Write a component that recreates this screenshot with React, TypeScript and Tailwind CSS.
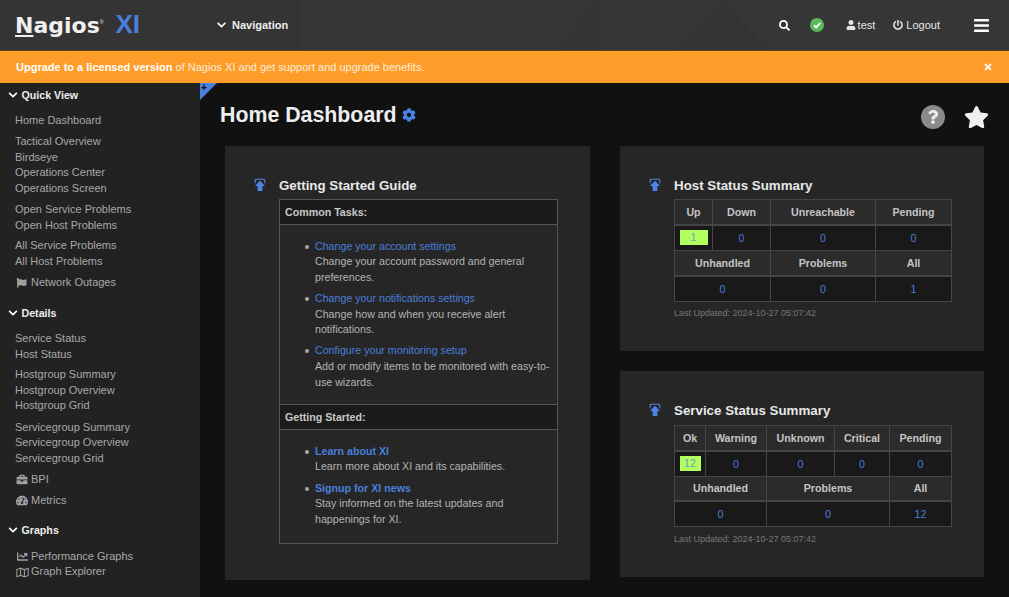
import React from "react";
import { FaChevronDown, FaSearch, FaUser, FaPowerOff, FaBars, FaTimes, FaFlag, FaBriefcase, FaTachometerAlt, FaRegMap, FaCog, FaStar, FaQuestion, FaChartLine } from "react-icons/fa";

const L = ({ children, icon }: { children: React.ReactNode; icon?: React.ReactNode }) => (
  <div className="flex h-[15.7px] items-center leading-[15.7px] text-[#a8a8a8]">
    {icon && <span className="flex w-[16px] shrink-0 justify-start pl-[1px] text-[#a0a0a0]">{icon}</span>}
    <span>{children}</span>
  </div>
);

const SecHead = ({ children }: { children: React.ReactNode }) => (
  <div className="flex h-[16px] items-center pl-[8px] text-[10.67px] font-bold text-[#eeeeee]">
    <FaChevronDown className="mr-[3.5px] h-[10px] w-[10px] text-white" />
    {children}
  </div>
);

const Pin = () => (
  <svg viewBox="0 0 14 14" className="absolute left-[28px] top-[32px] h-[14px] w-[14px]">
    <path d="M2.2 5.2 V2.4 Q2.2 1.2 3.4 1.2 H10.6 Q11.8 1.2 11.8 2.4 V5.2" fill="none" stroke="#4d84e8" strokeWidth="1.1" />
    <path d="M7 2.8 L12 8 H9.4 V13 H4.6 V8 H2 Z" fill="#4d84e8" />
  </svg>
);

const Th = ({ children, colSpan, h = "h-[25px]" }: { children: React.ReactNode; colSpan?: number; h?: string }) => (
  <td colSpan={colSpan} className={`${h} border border-b-2 border-[#454545] bg-[#2b2b2b] p-0 text-center font-bold text-[#c4c4c4]`}>
    {children}
  </td>
);
const Td = ({ children, colSpan, ok }: { children: React.ReactNode; colSpan?: number; ok?: boolean }) => (
  <td colSpan={colSpan} className="h-[26px] border border-[#454545] bg-[#191919] p-0 text-center text-[#4a7fdc]">
    {ok ? <div className="mx-[4.5px] bg-[#b2ff5f] leading-[15px] text-[#6aa5b8]">{children}</div> : children}
  </td>
);

const Card = ({ title, className, children }: { title: string; className: string; children: React.ReactNode }) => (
  <div className={`relative bg-[#262626] pl-[54px] pt-[31px] text-[10.67px] ${className}`}>
    <Pin />
    <h2 className="mb-[5px] h-[17px] text-[13.33px] font-bold leading-[17px] text-[#e8e8e8]">{title}</h2>
    {children}
  </div>
);

const Item = ({ link, bold, children }: { link: string; bold?: boolean; children: React.ReactNode }) => (
  <li className="relative leading-[15.7px] text-[#b4b4b4]">
    <span className="absolute left-[-10px] top-[6px] h-[4px] w-[4px] rounded-full bg-[#aaaaaa]" />
    <div className={`text-[#4a7fdc] ${bold ? "font-bold" : ""}`}>{link}</div>
    {children}
  </li>
);

const Updated = ({ className }: { className: string }) => (
  <p className={`text-[9px] leading-[13px] text-[#777777] ${className}`}>Last Updated: 2024-10-27 05:07:42</p>
);

export default function App() {
  return (
    <div className="flex h-[597px] w-[1009px] flex-col overflow-hidden bg-[#111111] font-['Liberation_Sans',Arial,sans-serif] text-[11px]">
      <header className="relative flex h-[51px] shrink-0 items-center overflow-hidden border-b border-[#5a4320] bg-[#363636] text-[#e6e6e6]">
        <svg className="absolute inset-0 h-full w-full" viewBox="0 0 1009 51" preserveAspectRatio="none">
          <path d="M560 51 L592 4 L600 0 V51 Z" fill="#343434" />
          <path d="M673 51 L723 0 L767 51 Z" fill="#333333" />
          <path d="M0 0 H300 V51 H0 Z" fill="#343434" />
        </svg>
        <div className="relative ml-[15px] flex w-[201px] shrink-0 items-baseline">
          <span className="font-['DejaVu_Sans',sans-serif] text-[22px] font-bold leading-[24px] text-[#f0f0f0]">
            <span className="underline decoration-[2px] underline-offset-[2px]">N</span>agios
          </span>
          <span className="relative top-[-9px] text-[5px] text-[#f0f0f0]">®</span>
          <span className="ml-[12px] text-[26px] font-bold leading-[24px] text-[#4a7fdc]">XI</span>
        </div>
        <div className="relative flex items-center font-bold text-[#eeeeee]">
          <FaChevronDown className="mr-[5px] h-[10px] w-[11px] text-white" />
          Navigation
        </div>
        <div className="relative ml-auto flex items-center">
          <FaSearch className="mr-[20px] h-[11px] w-[11px] text-white" />
          <svg viewBox="0 0 14 14" className="mr-[22px] h-[14px] w-[14px]">
            <circle cx="7" cy="7" r="7" fill="#5cb85c" />
            <path d="M3.8 7.2 L6.1 9.4 L10.3 5" fill="none" stroke="#ffffff" strokeWidth="1.8" />
          </svg>
          <FaUser className="mr-[2px] h-[10px] w-[10px] text-[#e6e6e6]" />
          <span className="mr-[18px]">test</span>
          <FaPowerOff className="mr-[3px] h-[10px] w-[10px] text-[#e6e6e6]" />
          <span className="mr-[34px]">Logout</span>
          <FaBars className="mr-[20px] h-[17px] w-[15px] text-white" />
        </div>
      </header>

      <div className="flex h-[32px] shrink-0 items-center justify-between bg-[#ff9d2a] pl-[16px] pr-[16px] text-[#fbeedd]">
        <span>
          <b className="font-bold text-white">Upgrade to a licensed version</b> of Nagios XI and get support and upgrade benefits.
        </span>
        <FaTimes className="h-[10px] w-[10px] text-white" />
      </div>

      <div className="flex min-h-0 flex-1">
        <aside className="w-[200px] shrink-0 bg-[#222222] pt-[4px]">
          <SecHead>Quick View</SecHead>
          <div className="mt-[10px] pl-[15px]">
            <L>Home Dashboard</L>
            <div className="mt-[5.25px]">
              <L>Tactical Overview</L>
              <L>Birdseye</L>
              <L>Operations Center</L>
              <L>Operations Screen</L>
            </div>
            <div className="mt-[5.25px]">
              <L>Open Service Problems</L>
              <L>Open Host Problems</L>
            </div>
            <div className="mt-[4.75px]">
              <L>All Service Problems</L>
              <L>All Host Problems</L>
            </div>
            <div className="mt-[5.75px]">
              <L icon={<FaFlag className="h-[10px] w-[11px]" />}>Network Outages</L>
            </div>
          </div>
          <div className="mt-[14px]">
            <SecHead>Details</SecHead>
          </div>
          <div className="mt-[10px] pl-[15px]">
            <L>Service Status</L>
            <L>Host Status</L>
            <div className="mt-[4.75px]">
              <L>Hostgroup Summary</L>
              <L>Hostgroup Overview</L>
              <L>Hostgroup Grid</L>
            </div>
            <div className="mt-[5.5px]">
              <L>Servicegroup Summary</L>
              <L>Servicegroup Overview</L>
              <L>Servicegroup Grid</L>
            </div>
            <div className="mt-[5.25px]">
              <L icon={<FaBriefcase className="h-[11px] w-[12px]" />}>BPI</L>
            </div>
            <div className="mt-[5.25px]">
              <L icon={<FaTachometerAlt className="h-[11px] w-[12px]" />}>Metrics</L>
            </div>
          </div>
          <div className="mt-[13px]">
            <SecHead>Graphs</SecHead>
          </div>
          <div className="mt-[11.3px] pl-[15px]">
            <L icon={<FaChartLine className="h-[11px] w-[13px]" />}>Performance Graphs</L>
            <L icon={<FaRegMap className="h-[11px] w-[13px]" />}>Graph Explorer</L>
          </div>
        </aside>

        <main className="relative min-w-0 flex-1">
          <div className="absolute left-0 top-0 h-0 w-0 border-r-[17px] border-t-[17px] border-r-transparent border-t-[#4a7fdc]" />
          <span className="absolute left-[1px] top-0 text-[10px] font-bold leading-[10px] text-[#111111]">+</span>
          <div className="flex h-[63px] items-start justify-between pl-[20px] pr-[20px] pt-[19px]">
            <div className="flex items-center">
              <h1 className="text-[21.33px] font-bold leading-[26px] text-[#eeeeee]">Home Dashboard</h1>
              <FaCog className="ml-[5px] h-[14px] w-[14px] text-[#4a84ea]" />
            </div>
            <div className="mt-[3px] flex items-center">
              <span className="flex h-[24px] w-[24px] items-center justify-center rounded-full bg-[#8a8a8a]">
                <FaQuestion className="h-[14px] w-[14px] text-[#eeeeee]" />
              </span>
              <FaStar className="ml-[19px] h-[24px] w-[25px] text-[#f0f0f0]" />
            </div>
          </div>
          <div className="ml-[25px] flex items-start gap-[30px]">
            <Card title="Getting Started Guide" className="h-[434px] w-[365px]">
              <div className="w-[279px] border border-[#555555]">
                <div className="flex h-[25px] items-center border-b border-[#555555] bg-[#1b1b1b] pl-[5px] font-bold text-[#c8c8c8]">Common Tasks:</div>
                <ul className="flex flex-col gap-[5.2px] pb-[13.5px] pl-[35px] pr-[5px] pt-[13.5px]">
                  <Item link="Change your account settings">Change your account password and general preferences.</Item>
                  <Item link="Change your notifications settings">Change how and when you receive alert notifications.</Item>
                  <Item link="Configure your monitoring setup">Add or modify items to be monitored with easy-to-use wizards.</Item>
                </ul>
                <div className="flex h-[26px] items-center border-y border-[#555555] bg-[#1b1b1b] pl-[5px] font-bold text-[#c8c8c8]">Getting Started:</div>
                <ul className="flex flex-col gap-[5.6px] pb-[15px] pl-[35px] pr-[5px] pt-[14px]">
                  <Item link="Learn about XI" bold>Learn more about XI and its capabilities.</Item>
                  <Item link="Signup for XI news" bold>Stay informed on the latest updates and happenings for XI.</Item>
                </ul>
              </div>
            </Card>
            <div className="flex w-[364px] flex-col gap-[20px]">
              <Card title="Host Status Summary" className="h-[205px]">
                <table className="w-[277px] table-fixed border-collapse">
                  <colgroup>
                    <col className="w-[38px]" /><col className="w-[58px]" /><col className="w-[105px]" /><col className="w-[76px]" />
                  </colgroup>
                  <tbody>
                    <tr><Th>Up</Th><Th>Down</Th><Th>Unreachable</Th><Th>Pending</Th></tr>
                    <tr><Td ok>1</Td><Td>0</Td><Td>0</Td><Td>0</Td></tr>
                    <tr><Th colSpan={2}>Unhandled</Th><Th>Problems</Th><Th>All</Th></tr>
                    <tr><Td colSpan={2}>0</Td><Td>0</Td><Td>1</Td></tr>
                  </tbody>
                </table>
                <Updated className="mt-[5px]" />
              </Card>
              <Card title="Service Status Summary" className="h-[206px]">
                <table className="mt-[6px] w-[277px] table-fixed border-collapse">
                  <colgroup>
                    <col className="w-[31px]" /><col className="w-[61px]" /><col className="w-[68px]" /><col className="w-[55px]" /><col className="w-[62px]" />
                  </colgroup>
                  <tbody>
                    <tr><Th>Ok</Th><Th>Warning</Th><Th>Unknown</Th><Th>Critical</Th><Th>Pending</Th></tr>
                    <tr><Td ok>12</Td><Td>0</Td><Td>0</Td><Td>0</Td><Td>0</Td></tr>
                    <tr><Th colSpan={2} h="h-[24px]">Unhandled</Th><Th colSpan={2} h="h-[24px]">Problems</Th><Th h="h-[24px]">All</Th></tr>
                    <tr><Td colSpan={2}>0</Td><Td colSpan={2}>0</Td><Td>12</Td></tr>
                  </tbody>
                </table>
                <Updated className="mt-[6px]" />
              </Card>
            </div>
          </div>
        </main>
      </div>
    </div>
  );
}
